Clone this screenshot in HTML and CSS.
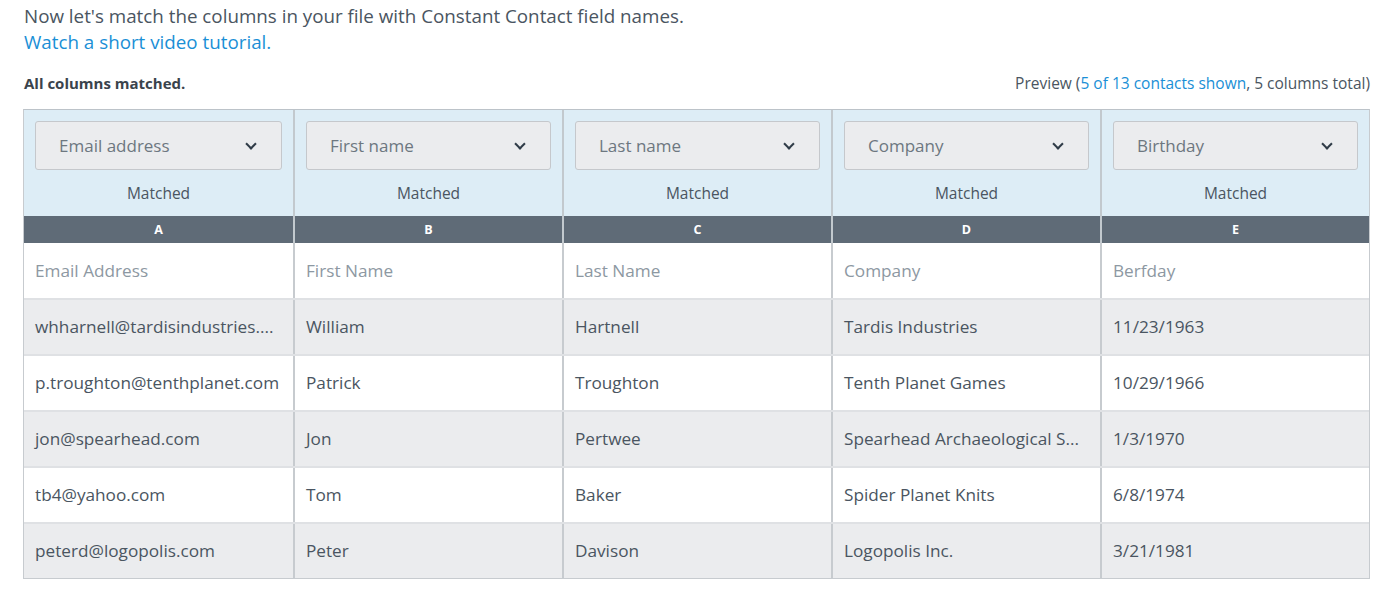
FILE: index.html
```html
<!DOCTYPE html>
<html>
  <head>
    <title>Match columns</title>
    <link rel="stylesheet" href="styles.css">
  </head>
  <body>
    <div class="intro">
      <p>Now let's match the columns in your file with Constant Contact field names.</p>
      <a href="#">Watch a short video tutorial.</a>
    </div>

    <div class="summary">
      <span class="status">All columns matched.</span>
      <span class="preview">Preview (<a href="#">5 of 13 contacts shown</a>, 5 columns total)</span>
    </div>

    <div class="map-table">
      <div class="map-head">
        <div class="map-cell">
          <div class="select">Email address <span class="chev"></span></div>
          <div class="matched">Matched</div>
        </div>
        <div class="map-cell">
          <div class="select">First name <span class="chev"></span></div>
          <div class="matched">Matched</div>
        </div>
        <div class="map-cell">
          <div class="select">Last name <span class="chev"></span></div>
          <div class="matched">Matched</div>
        </div>
        <div class="map-cell">
          <div class="select">Company <span class="chev"></span></div>
          <div class="matched">Matched</div>
        </div>
        <div class="map-cell">
          <div class="select">Birthday <span class="chev"></span></div>
          <div class="matched">Matched</div>
        </div>
      </div>

      <div class="letters">
        <div>A</div><div>B</div><div>C</div><div>D</div><div>E</div>
      </div>

      <div class="row names">
        <div>Email Address</div><div>First Name</div><div>Last Name</div><div>Company</div><div>Berfday</div>
      </div>
      <div class="row odd">
        <div>whharnell@tardisindustries....</div><div>William</div><div>Hartnell</div><div>Tardis Industries</div><div>11/23/1963</div>
      </div>
      <div class="row">
        <div>p.troughton@tenthplanet.com</div><div>Patrick</div><div>Troughton</div><div>Tenth Planet Games</div><div>10/29/1966</div>
      </div>
      <div class="row odd">
        <div>jon@spearhead.com</div><div>Jon</div><div>Pertwee</div><div>Spearhead Archaeological S...</div><div>1/3/1970</div>
      </div>
      <div class="row">
        <div>tb4@yahoo.com</div><div>Tom</div><div>Baker</div><div>Spider Planet Knits</div><div>6/8/1974</div>
      </div>
      <div class="row odd">
        <div>peterd@logopolis.com</div><div>Peter</div><div>Davison</div><div>Logopolis Inc.</div><div>3/21/1981</div>
      </div>
    </div>
  </body>
</html>
```

FILE: styles.css
```css
body {
  font-family: "Open Sans", Lato, sans-serif;
  color: #4a5561;
  background: #fff;
  margin: 0;
  padding: 3px 14px 0 23px;
}
a {
  color: #1a8fd6;
  text-decoration: none;
}
.intro {
  font-size: 18.8px;
  line-height: 26px;
  padding-left: 1px;
}
.intro p {
  margin: 0;
}
.summary {
  display: flex;
  justify-content: space-between;
  align-items: center;
  margin: 18px 0 16px;
  line-height: 20px;
}
.status {
  font-weight: bold;
  font-size: 15px;
  color: #3a434c;
  padding-left: 1px;
}
.preview {
  font-size: 15.5px;
  color: #4a5561;
}
.map-table {
  border: 1px solid #c7cbcf;
  border-top-color: #bcc3c9;
}
.map-head,
.letters,
.row {
  display: grid;
  grid-template-columns: repeat(5, 1fr);
}
.map-head {
  background: #ddedf6;
}
.map-cell {
  padding: 11px 11px 0 11px;
  border-left: 2px solid #c2c9ce;
}
.map-cell:first-child,
.letters div:first-child,
.row div:first-child {
  border-left: none;
}
.select {
  position: relative;
  height: 47px;
  line-height: 47px;
  background: #ebecee;
  border: 1px solid #c5c8cc;
  border-radius: 3px;
  padding-left: 23px;
  font-size: 17px;
  color: #6d7780;
}
.chev {
  position: absolute;
  right: 26px;
  top: 18px;
  width: 6px;
  height: 6px;
  border-right: 2.5px solid #2f3b47;
  border-bottom: 2.5px solid #2f3b47;
  transform: rotate(45deg);
}
.matched {
  text-align: center;
  font-size: 15.5px;
  color: #4a5561;
  padding: 11px 0 11px;
  line-height: 24px;
}
.letters {
  background: #5f6b77;
  color: #fff;
  font-weight: bold;
  font-size: 12.5px;
  line-height: 27px;
  text-align: center;
}
.letters div {
  border-left: 2px solid #c2c9ce;
}
.row {
  background: #fff;
  border-top: 2px solid #dfe1e4;
  font-size: 17.2px;
}
.letters + .row {
  border-top: none;
}
.row div {
  border-left: 2px solid #c7cbcf;
  height: 54px;
  line-height: 54px;
  padding: 0 11px;
  white-space: nowrap;
}
.row.odd {
  background: #ebecee;
}
.row.names {
  color: #8d98a2;
}
.row.names div {
  height: 55px;
  line-height: 55px;
}
```
